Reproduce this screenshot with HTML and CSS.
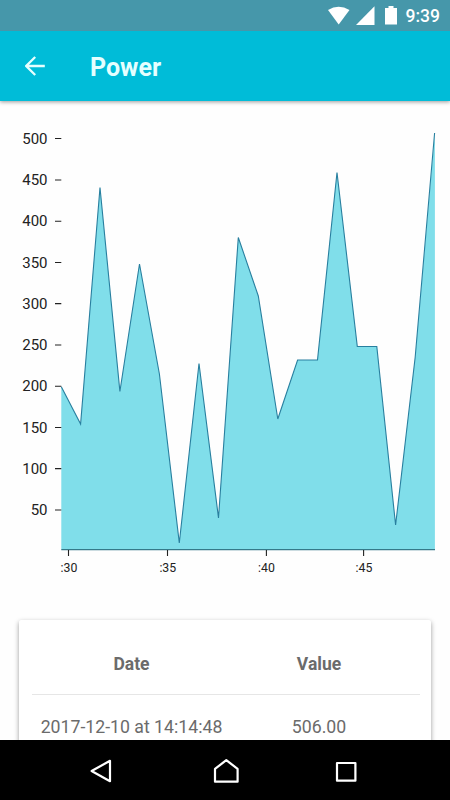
FILE: index.html
```html
<!DOCTYPE html>
<html lang="en">
<head>
	<meta charset="UTF-8">
	<meta name="viewport" content="width=device-width, initial-scale=1.0">
	<title>Power</title>
	<link rel="stylesheet" href="styles.css">
</head>
<body>

	<div class="status-bar">
		<svg width="80" height="26" viewBox="0 0 80 26" fill="#fff">
			<path d="M0 10 Q10.5 3.5 21.5 10 L10.7 24.5 Z"/>
			<path d="M46.5 6.3 V25 H28 Z"/>
			<path d="M57 8 H60.5 V6 H65.5 V8 H69 V24.5 H57 Z"/>
		</svg>
		<span class="clock">9:39</span>
	</div>

	<header class="toolbar">
		<svg class="back" width="20" height="20" viewBox="0 0 20 20">
			<path d="M19.8 10 H1.5 M10.2 1 L1.2 10 L10.2 19"/>
		</svg>
		<h1>Power</h1>
	</header>

	<main class="content">
		<svg class="chart" width="450" height="499" viewBox="0 101 450 499">
			<path class="area" d="M61.3 386.8 L80.6 424 L100 187.5 L119.9 391.5 L139.5 264 L159.4 374 L179.3 543 L199 363.5 L218.5 518 L238.3 237.5 L258.3 296 L277.8 419 L297.6 360 L317.5 360 L337 172.5 L357.3 346.5 L376.8 346.5 L395.6 525 L415.2 357 L434.9 133 V549.5 H61.3 Z"/>
			<path class="line" d="M61.3 386.8 L80.6 424 L100 187.5 L119.9 391.5 L139.5 264 L159.4 374 L179.3 543 L199 363.5 L218.5 518 L238.3 237.5 L258.3 296 L277.8 419 L297.6 360 L317.5 360 L337 172.5 L357.3 346.5 L376.8 346.5 L395.6 525 L415.2 357 L434.6 133"/>
			<path class="axis" d="M61.3 549.7 H435"/>
			<path class="ticks" d="M55 138.5 H61.3 M55 180 H61.3 M55 221.3 H61.3 M55 262.5 H61.3 M55 303.6 H61.3 M55 345 H61.3 M55 386.3 H61.3 M55 427.5 H61.3 M55 468.6 H61.3 M55 510 H61.3 M68.5 550 V556 M167.5 550 V556 M266.4 550 V556 M363.6 550 V556"/>
			<g class="y-labels">
				<text x="47.5" y="143.7">500</text>
				<text x="47.5" y="185">450</text>
				<text x="47.5" y="226.2">400</text>
				<text x="47.5" y="267.5">350</text>
				<text x="47.5" y="308.7">300</text>
				<text x="47.5" y="350">250</text>
				<text x="47.5" y="391.3">200</text>
				<text x="47.5" y="432.6">150</text>
				<text x="47.5" y="473.8">100</text>
				<text x="47.5" y="515.2">50</text>
			</g>
			<g class="x-labels">
				<text x="69" y="572.3">:30</text>
				<text x="167.8" y="572.3">:35</text>
				<text x="266.5" y="572.3">:40</text>
				<text x="364" y="572.3">:45</text>
			</g>
		</svg>

		<section class="card">
			<div class="row head">
				<div>Date</div>
				<div>Value</div>
			</div>
			<div class="row">
				<div>2017-12-10 at 14:14:48</div>
				<div>506.00</div>
			</div>
		</section>
	</main>

	<nav class="nav-bar">
		<svg width="24" height="26" viewBox="0 0 24 26">
			<path d="M21 2.8 V23.2 L2.6 13 Z"/>
		</svg>
		<svg width="30" height="26" viewBox="0 0 30 26">
			<path d="M6 23.7 V10.8 L17.3 2.2 L28.6 10.8 V23.7 Z"/>
		</svg>
		<svg width="22" height="26" viewBox="0 0 22 26">
			<path d="M2 5 H20.4 V22.7 H2 Z"/>
		</svg>
	</nav>

</body>
</html>
```
FILE: styles.css
```css
* {
	box-sizing: border-box;
}
body {
	font-family: Roboto, sans-serif;
	margin: 0;
	background: #fefefe;
	display: flex;
	flex-direction: column;
	height: 100vh;
	overflow: hidden;
}
.status-bar {
	flex: none;
	height: 31px;
	background: #4697aa;
	color: #fff;
	display: flex;
	align-items: flex-start;
	justify-content: flex-end;
	padding-right: 10.5px;
	z-index: 2;
}
.clock {
	width: 34px;
	margin-left: -2px;
	font-size: 17.5px;
	font-weight: 500;
	line-height: 33px;
	text-align: right;
	white-space: nowrap;
}
.toolbar {
	flex: none;
	height: 70px;
	background: #00bcd8;
	color: #e6ffff;
	display: flex;
	align-items: center;
	padding-left: 25px;
	box-shadow: 0 1px 4px rgba(0, 0, 0, 0.4);
	z-index: 1;
}
.back path {
	fill: none;
	stroke: #e6ffff;
	stroke-width: 2.3;
}
.toolbar h1 {
	margin: 3px 0 0 45px;
	font-size: 25px;
	font-weight: bold;
}
.content {
	flex: 1;
	min-height: 0;
	overflow: hidden;
}
.chart {
	display: block;
}
.area {
	fill: #80deea;
}
.line {
	fill: none;
	stroke: #287f9f;
	stroke-width: 1.1;
}
.axis {
	stroke: #35798a;
	stroke-width: 1.2;
}
.ticks {
	stroke: #222;
	stroke-width: 1.1;
}
.y-labels {
	font-size: 15px;
	fill: #222;
	text-anchor: end;
}
.x-labels {
	font-size: 12.3px;
	fill: #222;
	text-anchor: middle;
}
.card {
	margin: 20px 19px 0 19px;
	height: 200px;
	padding: 14px 11px 0 13px;
	background: #fff;
	border-radius: 2px;
	box-shadow: 0 2px 5px rgba(0, 0, 0, 0.4);
	color: #6b6b6b;
	font-size: 17.7px;
}
.row {
	height: 64px;
	display: grid;
	grid-template-columns: 199px 176px;
	align-items: center;
	text-align: center;
}
.row.head {
	height: 61px;
	font-size: 17.5px;
	font-weight: bold;
	border-bottom: 1px solid #e6e6e6;
}
.nav-bar {
	flex: none;
	height: 60px;
	background: #000;
	display: flex;
	align-items: flex-start;
	justify-content: space-between;
	padding: 18px 93px 0 88.5px;
}
.nav-bar path {
	fill: none;
	stroke: #fff;
	stroke-width: 2.2;
	stroke-linejoin: round;
}
```
